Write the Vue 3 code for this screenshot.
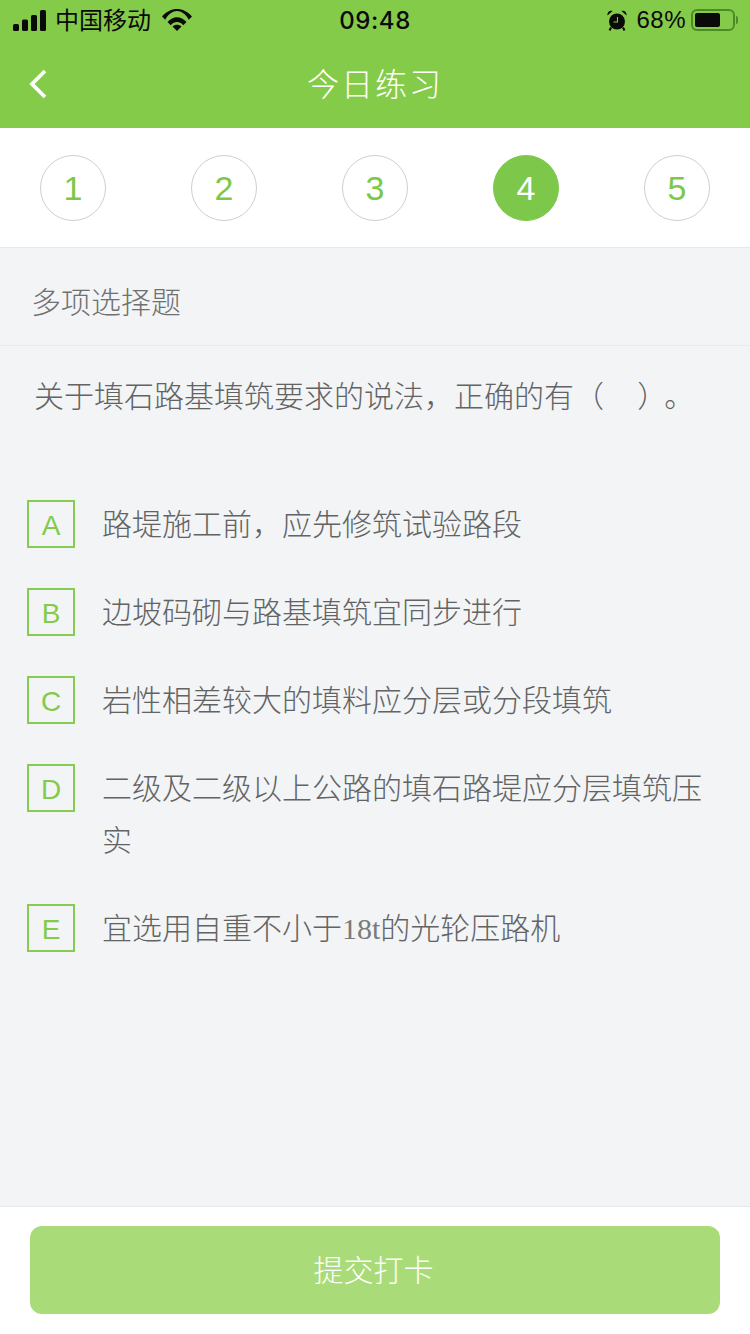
<script setup>
const steps = [1, 2, 3, 4, 5]
const options = [
  { key: 'A', text: '路堤施工前，应先修筑试验路段' },
  { key: 'B', text: '边坡码砌与路基填筑宜同步进行' },
  { key: 'C', text: '岩性相差较大的填料应分层或分段填筑' },
  { key: 'D', text: '二级及二级以上公路的填石路堤应分层填筑压实' },
  { key: 'E', pre: '宜选用自重不小于', serif: '18t', post: '的光轮压路机' }
]
</script>

<template>
  <div class="page">
    <header class="top">
      <div class="status">
        <div class="st-left">
          <svg class="signal" width="33" height="21" viewBox="0 0 33 21">
            <rect x="0" y="14" width="6" height="7" rx="1.5" fill="#0a0a0a" />
            <rect x="9" y="9.500" width="6" height="11.500" rx="1.500" fill="#0a0a0a" />
            <rect x="18" y="5" width="6" height="16" rx="1.500" fill="#0a0a0a" />
            <rect x="27" y="0" width="6" height="21" rx="1.500" fill="#0a0a0a" />
          </svg>
          <span class="carrier">中国移动</span>
          <svg class="wifi" width="30" height="22" viewBox="0 0 30 22">
            <path d="M0 7.500C8.500-2.500 21.500-2.500 30 7.500L26.800 10.700C20-.8 10-.8 3.200 10.700Z" fill="#0a0a0a" />
            <path d="M5.500 13C11 6.600 19 6.600 24.500 13L21.300 16.200C17.500 11.900 12.500 11.900 8.700 16.200Z" fill="#0a0a0a" />
            <path d="M10.500 17.500C13 15 17 15 19.500 17.500L15 22Z" fill="#0a0a0a" />
          </svg>
        </div>
        <div class="time">09:48</div>
        <div class="st-right">
          <svg class="alarm" width="20" height="21" viewBox="0 0 20 21">
            <circle cx="10" cy="11.500" r="8" fill="#0a0a0a" />
            <path d="M0.500 5.500C0 2 3 0 5.500 1ZM19.500 5.500C20 2 17 0 14.500 1Z" fill="#0a0a0a" />
            <path d="M4 17.500L2.500 20.500M16 17.500L17.500 20.500" stroke="#0a0a0a" stroke-width="2" />
            <path d="M10.500 7V12H6.500" stroke="#85cb4a" stroke-width="1.100" fill="none" />
          </svg>
          <span class="pct">68%</span>
          <div class="battery"><div class="level"></div></div>
          <div class="nub"></div>
        </div>
      </div>
      <div class="nav">
        <svg class="back" width="22" height="34" viewBox="0 0 22 34">
          <path d="M18 4L5 17L18 30" fill="none" stroke="#fff" stroke-width="3.800" />
        </svg>
        <h1 class="title">今日练习</h1>
        <span></span>
      </div>
    </header>

    <nav class="steps">
      <div v-for="n in steps" :key="n" class="step" :class="{ active: n === 4 }">{{ n }}</div>
    </nav>

    <main class="body">
      <div class="kind">多项选择题</div>
      <p class="question">关于填石路基填筑要求的说法，正确的有（&nbsp;&nbsp;&nbsp;&nbsp;&nbsp;）<span class="stop">。</span></p>
      <ul class="options">
        <li v-for="o in options" :key="o.key" class="option">
          <span class="letter">{{ o.key }}</span>
          <span class="text" v-if="o.text">{{ o.text }}</span>
          <span class="text" v-else>{{ o.pre }}<span class="serif">{{ o.serif }}</span>{{ o.post }}</span>
        </li>
      </ul>
    </main>

    <footer class="foot">
      <button class="submit">提交打卡</button>
    </footer>
  </div>
</template>

<style>
html, body { margin: 0; padding: 0; }
</style>

<style scoped>
.page {
  width: 750px;
  height: 1334px;
  display: flex;
  flex-direction: column;
  background: #f2f4f6;
  font-family: "Noto Sans CJK SC", "Liberation Sans", sans-serif;
  overflow: hidden;
}
.top { background: #85cb4a; height: 128px; flex: none; }
.status {
  height: 40px;
  display: grid;
  grid-template-columns: 1fr auto 1fr;
  align-items: center;
  color: #0a0a0a;
}
.st-left { display: flex; align-items: center; padding-left: 13px; }
.signal { margin-right: 9px; }
.carrier { font-size: 24px; font-weight: 400; line-height: 38px; padding-bottom: 2px; }
.wifi { margin-left: 11px; }
.time { font: 500 24px "Inter", "Liberation Sans", sans-serif; letter-spacing: 0.6px; }
.st-right { display: flex; align-items: center; justify-content: flex-end; padding-right: 12px; }
.alarm { margin-right: 9px; }
.pct { font: 400 24px "Liberation Sans", sans-serif; margin-right: 5px; letter-spacing: .5px; }
.battery {
  width: 44px; height: 22px; box-sizing: border-box;
  border: 2px solid #4f8a28; border-radius: 6px; padding: 2px;
}
.level { width: 25px; height: 14px; background: #0a0a0a; border-radius: 2px; }
.nub { width: 2px; height: 8px; background: #4f8a28; margin-left: 1px; border-radius: 0 2px 2px 0; }
.nav {
  height: 88px;
  display: grid;
  grid-template-columns: 1fr auto 1fr;
  align-items: center;
  padding-bottom: 4px;
  box-sizing: border-box;
}
.back { margin: 3px 0 0 27px; }
.title { margin: 0; font-size: 32px; font-weight: 300; color: #fff; letter-spacing: 2px; }
.steps {
  flex: none;
  height: 120px;
  box-sizing: border-box;
  background: #fff;
  border-bottom: 1px solid #e8e9ea;
  display: flex;
  justify-content: space-between;
  align-items: flex-start;
  padding: 27px 40px 0;
}
.step {
  width: 66px; height: 66px; box-sizing: border-box;
  border: 1px solid #cfcfcf; border-radius: 50%;
  display: flex; align-items: center; justify-content: center;
  color: #7dc84a;
  font: 400 34px "Liberation Sans", sans-serif;
}
.step.active { background: #7dc84a; border-color: #7dc84a; color: #fff; }
.body { flex: 1; min-height: 0; display: flex; flex-direction: column; }
.kind {
  height: 98px; box-sizing: border-box;
  border-bottom: 1px solid #e8eaec;
  padding-left: 31px;
  line-height: 104px;
  font-size: 30px; font-weight: 300; color: #707070;
}
.question {
  margin: 0;
  padding: 23px 34px 0;
  line-height: 50px;
  font-size: 30px; font-weight: 300; color: #636363;
  white-space: nowrap;
}
.stop { margin-left: 12px; }
.options { list-style: none; margin: 0; padding: 81px 27px 0; }
.option { display: flex; align-items: flex-start; margin-bottom: 40px; }
.letter {
  flex: none;
  width: 48px; height: 48px; box-sizing: border-box;
  border: 2px solid #86cc52;
  padding-top: 4px;
  display: flex; align-items: center; justify-content: center;
  color: #85cb4a;
  font: 400 28px "Liberation Sans", sans-serif;
}
.text {
  margin-left: 27px;
  margin-top: -4px;
  line-height: 52px;
  font-size: 30px; font-weight: 300; color: #636363;
}
.serif { font-family: "Liberation Serif", serif; color: #7a7a7a; }
.foot {
  flex: none;
  height: 128px; box-sizing: border-box;
  background: #fff;
  border-top: 1px solid #e8e9ea;
  padding: 19px 30px 0;
}
.submit {
  display: block; width: 100%; height: 88px;
  border: 0; border-radius: 12px;
  background: #a9dc79; color: #fff;
  font-family: inherit; font-size: 30px; font-weight: 300;
  padding: 0 3px 4px 0;
}
</style>
